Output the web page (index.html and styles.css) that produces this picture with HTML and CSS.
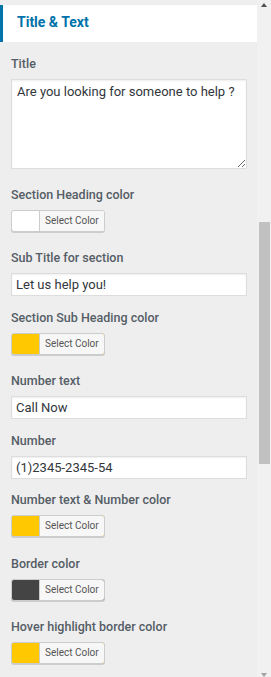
FILE: index.html
```html
<!DOCTYPE html>
<html lang="en">

<head>
    <meta charset="UTF-8">
    <meta name="viewport" content="width=device-width, initial-scale=1.0">
    <title>Customize - Title &amp; Text</title>
    <link rel="stylesheet" href="styles.css">
</head>

<body>

    <div class="frame">
        <div class="panel">
            <h3 class="section-head">Title &amp; Text</h3>

            <ul class="controls">
                <li class="control control-textarea">
                    <label class="control-title" for="ctaTitle">Title</label>
                    <textarea id="ctaTitle" rows="5">Are you looking for someone to help ?</textarea>
                </li>

                <li class="control control-color">
                    <span class="control-title">Section Heading color</span>
                    <button type="button" class="color-result" style="background-color: #ffffff;"><span class="color-result-text">Select Color</span></button>
                </li>

                <li class="control control-text">
                    <label class="control-title" for="ctaSubTitle">Sub Title for section</label>
                    <input type="text" id="ctaSubTitle" value="Let us help you!">
                </li>

                <li class="control control-color">
                    <span class="control-title">Section Sub Heading color</span>
                    <button type="button" class="color-result" style="background-color: #ffc800;"><span class="color-result-text">Select Color</span></button>
                </li>

                <li class="control control-text">
                    <label class="control-title" for="ctaNumberText">Number text</label>
                    <input type="text" id="ctaNumberText" value="Call Now">
                </li>

                <li class="control control-text">
                    <label class="control-title" for="ctaNumber">Number</label>
                    <input type="text" id="ctaNumber" value="(1)2345-2345-54">
                </li>

                <li class="control control-color">
                    <span class="control-title">Number text &amp; Number color</span>
                    <button type="button" class="color-result" style="background-color: #ffc800;"><span class="color-result-text">Select Color</span></button>
                </li>

                <li class="control control-color">
                    <span class="control-title">Border color</span>
                    <button type="button" class="color-result" style="background-color: #444444;"><span class="color-result-text">Select Color</span></button>
                </li>

                <li class="control control-color">
                    <span class="control-title">Hover highlight border color</span>
                    <button type="button" class="color-result" style="background-color: #ffc800;"><span class="color-result-text">Select Color</span></button>
                </li>
            </ul>
        </div>

        <div class="scrollbar">
            <span class="scroll-arrow up"></span>
            <span class="scroll-thumb"></span>
            <span class="scroll-arrow down"></span>
        </div>
    </div>

</body>
</html>
```

FILE: styles.css
```css
body {
    font-family: Roboto, "Noto Sans", sans-serif;
    margin: 0;
    background-color: #eeeeee;
    color: #555d66;
}

.frame {
    display: flex;
    height: 677px;
    overflow: hidden;
}

.panel {
    flex: 1;
    min-width: 0;
}

.section-head {
    margin: 5px 0 0;
    padding: 7px 0 10px 14px;
    line-height: 20px;
    font-size: 14px;
    font-weight: 700;
    color: #0073aa;
    background-color: #fff;
    border-left: 3px solid #0073aa;
}

.controls {
    list-style: none;
    margin: 0;
    padding: 13px 10px 0 11px;
}

.control-title {
    display: block;
    font-size: 12.5px;
    font-weight: 500;
    line-height: 18px;
    margin-bottom: 6px;
    color: #555d66;
}

.control-textarea {
    margin-bottom: 16.5px;
}

.control-text {
    margin-bottom: 12.5px;
}

.control-color {
    margin-bottom: 17.5px;
}

.control textarea,
.control input {
    display: block;
    box-sizing: border-box;
    width: 100%;
    margin: 0;
    font-family: Roboto, "Noto Sans", sans-serif;
    font-size: 13px;
    color: #32373c;
    background-color: #fff;
    border: 1px solid #ddd;
    border-radius: 0;
    box-shadow: inset 0 1px 2px rgba(0, 0, 0, 0.07);
    outline: none;
}

.control textarea {
    height: 90px;
    padding: 3px 5px;
    line-height: 18px;
}

.control input {
    height: 23px;
    padding: 0 4px;
}

.color-result {
    display: block;
    height: 22px;
    margin: 0;
    padding: 0 0 0 27px;
    border: 1px solid #ccc;
    border-radius: 3px;
    box-shadow: 0 1px 0 #ccc;
    cursor: pointer;
}

.color-result-text {
    display: block;
    height: 20px;
    padding: 0 5px;
    line-height: 20px;
    font-family: Roboto, "Noto Sans", sans-serif;
    font-size: 10px;
    color: #555;
    background-color: #f7f7f7;
    border-left: 1px solid #ccc;
    border-radius: 0 2px 2px 0;
}

.scrollbar {
    display: flex;
    flex-direction: column;
    align-items: center;
    width: 14px;
    background-color: #f1f1f1;
}

.scroll-arrow {
    width: 0;
    height: 0;
    border-left: 3.5px solid transparent;
    border-right: 3.5px solid transparent;
}

.scroll-arrow.up {
    margin-top: 3px;
    border-bottom: 4px solid #505050;
}

.scroll-thumb {
    width: 11px;
    height: 248px;
    margin-top: 215px;
    margin-left: 1px;
    background-color: #c1c1c1;
}

.scroll-arrow.down {
    margin-top: 209px;
    border-top: 4px solid #a3a3a3;
}
```
